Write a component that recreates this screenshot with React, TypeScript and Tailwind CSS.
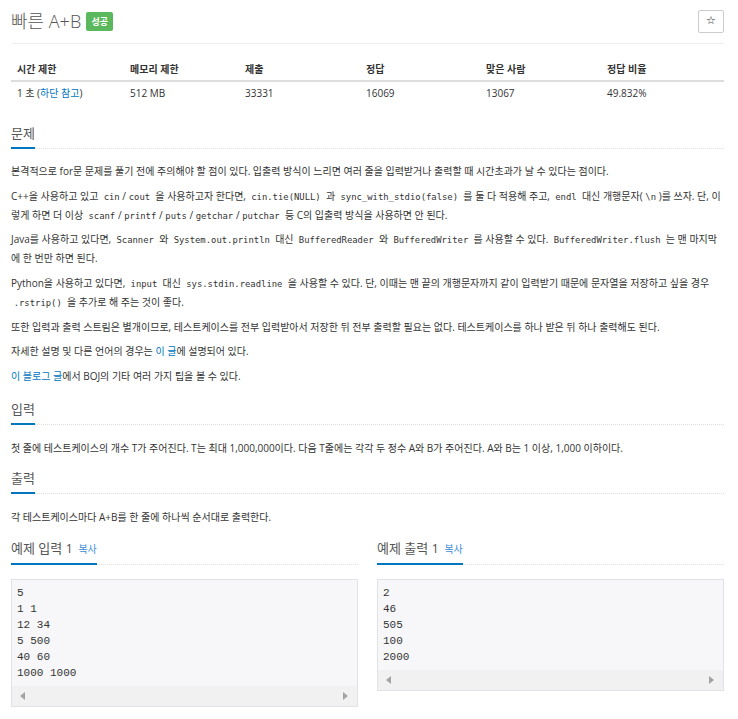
import React from 'react';

const FONT = '[font-family:"Open_Sans","Noto_Sans_CJK_KR",sans-serif]';

const Code = ({ children }: { children: React.ReactNode }) => (
  <code className='px-[2.7px] text-[8.9px] leading-none [font-family:"DejaVu_Sans_Mono","Noto_Sans_CJK_KR",monospace]'>
    {children}
  </code>
);

const A = ({ children }: { children: React.ReactNode }) => (
  <a href="#" className="text-[#0076c0] no-underline">
    {children}
  </a>
);

const SectionTitle = ({ children, className = '' }: { children: React.ReactNode; className?: string }) => (
  <div className={`border-b border-dotted border-[#ddd] ${className}`}>
    <h2 className="-mb-px inline-block border-b-2 border-[#0076c0] pb-[3px] text-[13px] leading-[22px] font-normal text-[#555]">
      {children}
    </h2>
  </div>
);

const P = ({ children }: { children: React.ReactNode }) => (
  <p className="mb-[5.7px] leading-[19px]">{children}</p>
);

const Arrow = ({ dir }: { dir: 'left' | 'right' }) => (
  <svg width="5" height="8" viewBox="0 0 5 8">
    <polygon points={dir === 'left' ? '5,0 0,4 5,8' : '0,0 5,4 0,8'} fill="#a3a3a3" />
  </svg>
);

const Sample = ({ title, lines }: { title: string; lines: string[] }) => (
  <div>
    <SectionTitle>
      {title} <span className="ml-[2px] text-[10px] text-[#3c8dd6]">복사</span>
    </SectionTitle>
    <div className="mt-[14px] border border-[#e1e1e8] bg-[#f7f7f9]">
      <pre className='px-[5px] pt-[5px] pb-[5px] text-[11px] leading-[16px] text-[#333] [font-family:"Liberation_Mono",monospace]'>
        {lines.join('\n')}
      </pre>
      <div className="flex h-[20px] items-center justify-between bg-[#f1f1f1] pl-[8px] pr-[9px]">
        <Arrow dir="left" />
        <Arrow dir="right" />
      </div>
    </div>
  </div>
);

const stats = [
  { label: '시간 제한', w: 'w-[113px]' },
  { label: '메모리 제한', w: 'w-[115px]' },
  { label: '제출', w: 'w-[121px]' },
  { label: '정답', w: 'w-[120px]' },
  { label: '맞은 사람', w: 'w-[121px]' },
  { label: '정답 비율', w: '' },
];

export default function App() {
  return (
    <div className={`flex min-h-screen flex-col bg-white pl-[11px] pr-[14px] text-[10px] text-[#333] ${FONT}`}>
      {/* title row */}
      <div className="flex items-center justify-between pt-[10px]">
        <div className="flex items-center">
          <h1 className="text-[18px] leading-[23px] font-light text-[#555]">빠른 A+B</h1>
          <span className="ml-[5px] flex h-[19px] w-[27px] items-center justify-center rounded-[2px] bg-[#5cb85c] text-[9px] font-bold text-white">
            성공
          </span>
        </div>
        <button className="flex h-[23px] w-[26px] items-center justify-center rounded-[2px] border border-[#ccc] bg-white text-[11px] text-[#222] [font-family:'DejaVu_Sans',sans-serif]">
          ☆
        </button>
      </div>
      <div className="mt-[10px] border-t border-[#eee]" />

      {/* stats table */}
      <table className="mt-[9px] w-full table-fixed border-collapse">
        <thead>
          <tr>
            {stats.map((s) => (
              <th key={s.label} className={`${s.w} border-b-2 border-[#ddd] pt-[8px] pb-[2px] pl-[6px] text-left leading-[17px] font-bold`}>
                {s.label}
              </th>
            ))}
          </tr>
        </thead>
        <tbody>
          <tr>
            <td className="py-[3px] pl-[6px] leading-[17px]">
              1 초 (<A>하단 참고</A>)
            </td>
            <td className="py-[3px] pl-[6px] leading-[17px]">512 MB</td>
            <td className="py-[3px] pl-[6px] leading-[17px]">33331</td>
            <td className="py-[3px] pl-[6px] leading-[17px]">16069</td>
            <td className="py-[3px] pl-[6px] leading-[17px]">13067</td>
            <td className="py-[3px] pl-[6px] leading-[17px]">49.832%</td>
          </tr>
        </tbody>
      </table>

      {/* 문제 */}
      <SectionTitle className="mt-[17px]">문제</SectionTitle>
      <div className="mt-[13px]">
        <P>
          본격적으로 for문 문제를 풀기 전에 주의해야 할 점이 있다. 입출력 방식이 느리면 여러 줄을 입력받거나 출력할 때 시간초과가 날 수 있다는 점이다.
        </P>
        <P>
          C++을 사용하고 있고 <Code>cin</Code>/<Code>cout</Code> 을 사용하고자 한다면, <Code>cin.tie(NULL)</Code> 과{' '}
          <Code>sync_with_stdio(false)</Code> 를 둘 다 적용해 주고, <Code>endl</Code> 대신 개행문자(<Code>\n</Code>)를 쓰자. 단, 이렇게
          하면 더 이상 <Code>scanf</Code>/<Code>printf</Code>/<Code>puts</Code>/<Code>getchar</Code>/<Code>putchar</Code> 등 C의 입출력
          방식을 사용하면 안 된다.
        </P>
        <P>
          Java를 사용하고 있다면, <Code>Scanner</Code> 와 <Code>System.out.println</Code> 대신 <Code>BufferedReader</Code> 와{' '}
          <Code>BufferedWriter</Code> 를 사용할 수 있다. <Code>BufferedWriter.flush</Code> 는 맨 마지막에 한 번만 하면 된다.
        </P>
        <P>
          Python을 사용하고 있다면, <Code>input</Code> 대신 <Code>sys.stdin.readline</Code> 을 사용할 수 있다. 단, 이때는 맨 끝의
          개행문자까지 같이 입력받기 때문에 문자열을 저장하고 싶을 경우 <Code>.rstrip()</Code> 을 추가로 해 주는 것이 좋다.
        </P>
        <P>
          또한 입력과 출력 스트림은 별개이므로, 테스트케이스를 전부 입력받아서 저장한 뒤 전부 출력할 필요는 없다. 테스트케이스를 하나 받은 뒤 하나
          출력해도 된다.
        </P>
        <P>
          자세한 설명 및 다른 언어의 경우는 <A>이 글</A>에 설명되어 있다.
        </P>
        <P>
          <A>이 블로그 글</A>에서 BOJ의 기타 여러 가지 팁을 볼 수 있다.
        </P>
      </div>

      {/* 입력 */}
      <SectionTitle className="mt-[6px]">입력</SectionTitle>
      <div className="mt-[14px]">
        <P>
          첫 줄에 테스트케이스의 개수 T가 주어진다. T는 최대 1,000,000이다. 다음 T줄에는 각각 두 정수 A와 B가 주어진다. A와 B는 1 이상, 1,000
          이하이다.
        </P>
      </div>

      {/* 출력 */}
      <SectionTitle className="mt-[3.5px]">출력</SectionTitle>
      <div className="mt-[14px]">
        <P>각 테스트케이스마다 A+B를 한 줄에 하나씩 순서대로 출력한다.</P>
      </div>

      {/* 예제 */}
      <div className="mt-[4.5px] grid grid-cols-2 gap-x-[19px]">
        <Sample title="예제 입력 1" lines={['5', '1 1', '12 34', '5 500', '40 60', '1000 1000']} />
        <Sample title="예제 출력 1" lines={['2', '46', '505', '100', '2000']} />
      </div>
    </div>
  );
}
